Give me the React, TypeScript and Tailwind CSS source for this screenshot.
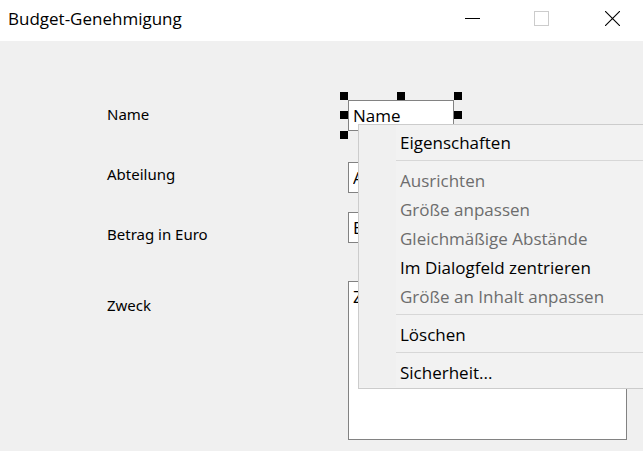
import clsx from "clsx";

const menuGroups = [
  [{ label: "Eigenschaften" }],
  [
    { label: "Ausrichten", disabled: true },
    { label: "Größe anpassen", disabled: true },
    { label: "Gleichmäßige Abstände", disabled: true },
    { label: "Im Dialogfeld zentrieren" },
    { label: "Größe an Inhalt anpassen", disabled: true },
  ],
  [{ label: "Löschen" }],
  [{ label: "Sicherheit..." }],
];

const fieldClass =
  "block h-[31px] w-[106px] border border-[#828282] bg-white px-1 text-[17px] leading-6 text-black outline-none";

function TitleBar() {
  return (
    <header className="flex h-[41px] items-center justify-between overflow-hidden bg-white pb-1 pl-2">
      <h1 className="text-[17px] leading-6">Budget-Genehmigung</h1>
      <div className="-mr-1 flex h-full">
        <button type="button" aria-label="Minimieren" className="flex w-[65px] items-center justify-center">
          <svg width="15" height="15" viewBox="0 0 15 15" shapeRendering="crispEdges">
            <path d="M0 7.5h15" stroke="#000" />
          </svg>
        </button>
        <button type="button" aria-label="Maximieren" disabled className="flex w-[73px] items-center justify-center">
          <svg width="15" height="15" viewBox="0 0 15 15" shapeRendering="crispEdges">
            <rect x="0.5" y="0.5" width="14" height="14" fill="none" stroke="#ccc" />
          </svg>
        </button>
        <button type="button" aria-label="Schließen" className="flex w-[69px] items-center justify-center">
          <svg width="15" height="15" viewBox="0 0 15 15">
            <path d="M0 0l15 15M15 0L0 15" stroke="#000" strokeWidth="1.1" />
          </svg>
        </button>
      </div>
    </header>
  );
}

function SelectionHandles() {
  return (
    <>
      <span className="absolute -left-2 -top-2 size-2 bg-black" />
      <span className="absolute -top-2 left-1/2 size-2 -translate-x-1/2 bg-black" />
      <span className="absolute -right-2 -top-2 size-2 bg-black" />
      <span className="absolute -left-2 top-[11px] size-2 bg-black" />
      <span className="absolute -right-2 top-[11px] size-2 bg-black" />
      <span className="absolute -bottom-2 -left-2 size-2 bg-black" />
    </>
  );
}

function ContextMenu() {
  return (
    <div
      role="menu"
      className="absolute left-[10px] top-6 z-10 flex w-[320px] border border-[#ccc] bg-[#f2f2f2] pb-px"
    >
      <div className="w-[37px] shrink-0 bg-[#f0f0f0]" />
      <div className="flex-1 pt-[3px]">
        {menuGroups.map((group, i) => (
          <div key={i} className={clsx(i > 0 && "mt-[3px] border-t border-[#d7d7d7] pt-[5px]")}>
            {group.map((item) => (
              <button
                key={item.label}
                type="button"
                role="menuitem"
                disabled={item.disabled}
                className="block h-[29px] w-full whitespace-nowrap pl-1 text-left text-[17px] leading-[29px] text-black disabled:text-[#6d6d6d]"
              >
                {item.label}
              </button>
            ))}
          </div>
        ))}
      </div>
    </div>
  );
}

export default function App() {
  return (
    <div className="flex min-h-screen flex-col overflow-hidden bg-[#f0f0f0] font-['Open_Sans',sans-serif] text-black">
      <TitleBar />
      <form className="flex pb-3 pl-[107px] pr-4 pt-[59px]">
        <div className="flex w-[241px] shrink-0 flex-col items-start gap-10 pt-1 font-['Noto_Sans',sans-serif] text-[15px] leading-5">
          <label htmlFor="name">Name</label>
          <label htmlFor="abteilung">Abteilung</label>
          <label htmlFor="betrag">Betrag in Euro</label>
          <label htmlFor="zweck" className="mt-[11px]">Zweck</label>
        </div>
        <div className="min-w-0 flex-1">
          <div className="relative w-[106px]">
            <input id="name" defaultValue="Name" className={fieldClass} />
            <SelectionHandles />
            <ContextMenu />
          </div>
          <input id="abteilung" defaultValue="Abteilung" className={clsx(fieldClass, "mt-[31px]")} />
          <input id="betrag" defaultValue="Betrag in Euro" className={clsx(fieldClass, "mt-[19px]")} />
          <textarea
            id="zweck"
            defaultValue="Zweck"
            className="mt-[38px] block h-[159px] w-full resize-none border border-[#828282] bg-white px-1 pt-[3px] text-[17px] leading-6 outline-none"
          />
        </div>
      </form>
    </div>
  );
}
